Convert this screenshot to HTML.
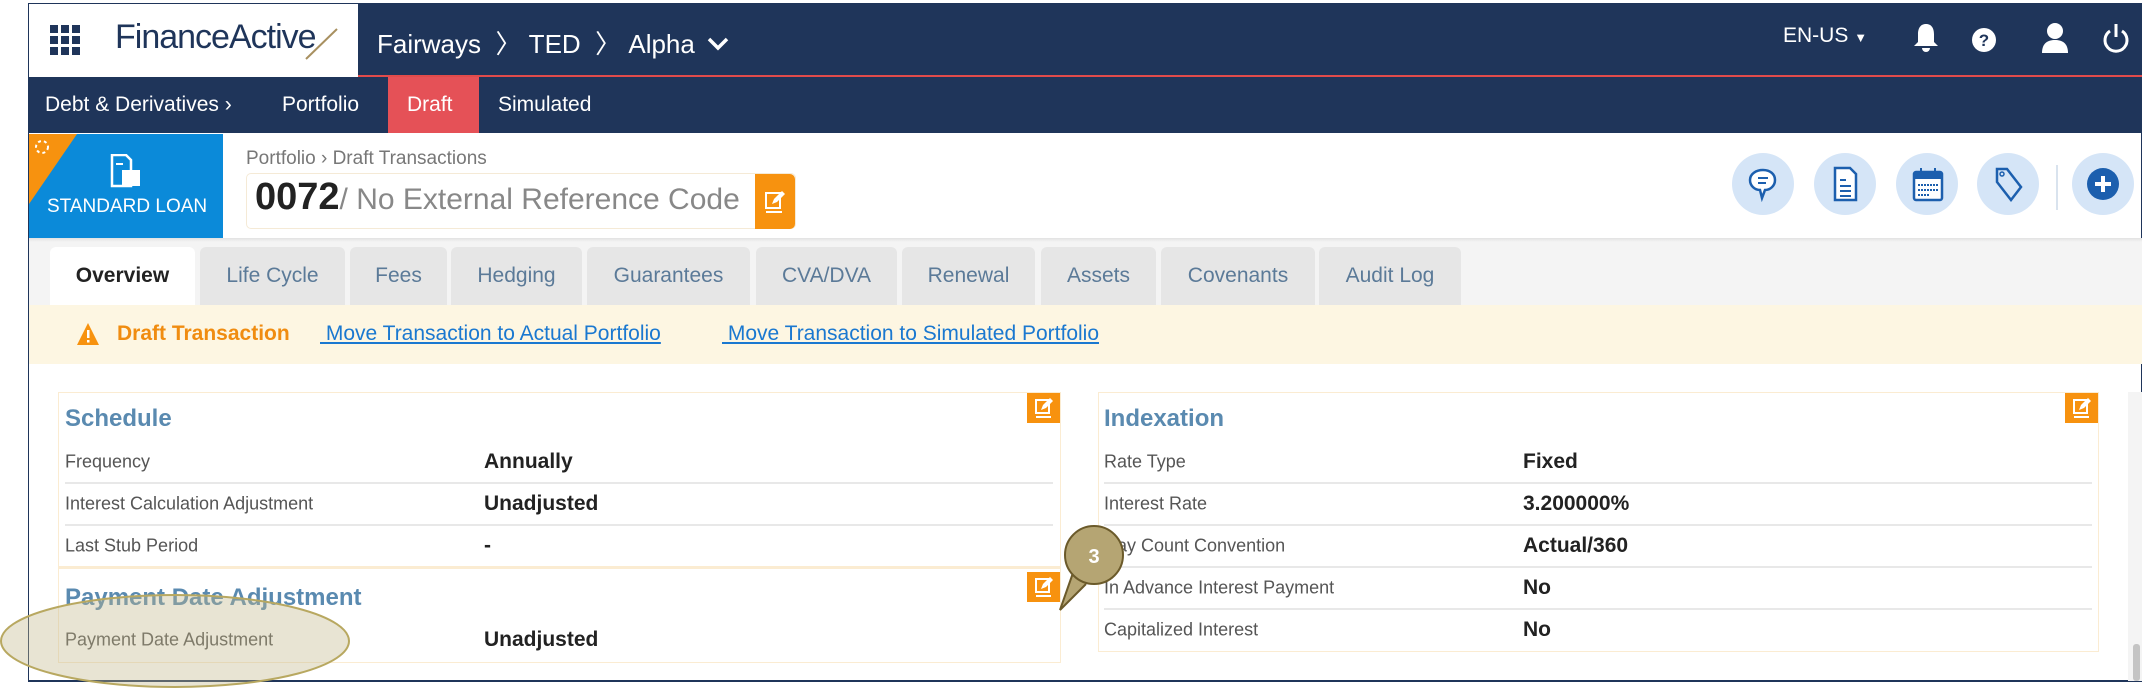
<!DOCTYPE html>
<html><head><meta charset="utf-8"><style>
*{margin:0;padding:0;box-sizing:border-box}
body{width:2150px;height:689px;background:#fff;position:relative;overflow:hidden;font-family:"Liberation Sans",sans-serif}
.a{position:absolute;white-space:nowrap}
.tab{position:absolute;top:247px;height:58px;background:#e6e6e6;border-radius:6px 6px 0 0;color:#5b7a98;font-size:21px;line-height:58px;text-align:center}
.lbl{position:absolute;font-size:18px;color:#555;transform:translateY(-50%)}
.val{position:absolute;font-size:21px;font-weight:bold;color:#222;transform:translateY(-50%)}
.ln{position:absolute;height:2px;background:#e8e8e8}
.ed{position:absolute;width:33px;height:30px;background:#f7920f}
.circ{position:absolute;top:153px;width:62px;height:62px;border-radius:50%;background:#d5e5f7}
</style></head><body>
<div class="a" style="left:28px;top:3px;width:2114px;height:679px;border:1px solid #1f355a;border-bottom:2px solid #1f355a"></div>
<div class="a" style="left:28px;top:3px;width:2114px;height:73px;background:#1f355a"></div>
<div class="a" style="left:29px;top:4px;width:329px;height:72px;background:#fff"></div>
<svg class="a" style="left:50px;top:25px" width="31" height="30"><g fill="#1f355a"><rect x="0" y="0" width="8" height="8"/><rect x="11" y="0" width="8" height="8"/><rect x="22" y="0" width="8" height="8"/><rect x="0" y="11" width="8" height="8"/><rect x="11" y="11" width="8" height="8"/><rect x="22" y="11" width="8" height="8"/><rect x="0" y="22" width="8" height="8"/><rect x="11" y="22" width="8" height="8"/><rect x="22" y="22" width="8" height="8"/></g></svg>
<div class="a" style="left:115px;top:18px;font-size:34px;color:#1f355a;letter-spacing:-1px">FinanceActive</div>
<svg class="a" style="left:303px;top:28px" width="35" height="32"><line x1="34" y1="1" x2="3" y2="31" stroke="#a89060" stroke-width="2"/></svg>
<div class="a" style="left:377px;top:24px;font-size:26px;color:#fff">Fairways &nbsp;〉 TED &nbsp;〉 Alpha</div>
<svg class="a" style="left:706px;top:36px" width="24" height="16"><path d="M3 3l9 9 9-9" fill="none" stroke="#fff" stroke-width="3.5"/></svg>
<div class="a" style="left:1783px;top:24px;font-size:21px;color:#fff">EN-US <span style="font-size:13px">&#9660;</span></div>
<svg class="a" style="left:1912px;top:22px" width="28" height="32"><path d="M14 2c-6 0-8 5-8 10v8l-4 4h24l-4-4v-8c0-5-2-10-8-10z M10 26a4 4 0 0 0 8 0z" fill="#fff"/></svg>
<svg class="a" style="left:1972px;top:28px" width="24" height="24"><circle cx="12" cy="12" r="12" fill="#fff"/><text x="12" y="18" text-anchor="middle" font-size="17" font-weight="bold" fill="#1f355a" font-family="Liberation Sans">?</text></svg>
<svg class="a" style="left:2040px;top:22px" width="30" height="32"><circle cx="15" cy="9" r="8" fill="#fff"/><path d="M2 31c0-10 6-13 13-13s13 3 13 13z" fill="#fff"/></svg>
<svg class="a" style="left:2102px;top:22px" width="28" height="32"><path d="M8 9a11 11 0 1 0 12 0" fill="none" stroke="#fff" stroke-width="3"/><line x1="14" y1="2" x2="14" y2="15" stroke="#fff" stroke-width="3"/></svg>
<div class="a" style="left:358px;top:75px;width:1784px;height:2px;background:#e24b4b"></div>
<div class="a" style="left:29px;top:77px;width:2113px;height:56px;background:#1f355a"></div>
<div class="a" style="left:388px;top:77px;width:91px;height:56px;background:#e55157"></div>
<div class="a" style="left:45px;top:93px;font-size:21px;color:#fff">Debt &amp; Derivatives ›</div>
<div class="a" style="left:282px;top:93px;font-size:21px;color:#fff">Portfolio</div>
<div class="a" style="left:407px;top:93px;font-size:21px;color:#fff">Draft</div>
<div class="a" style="left:498px;top:93px;font-size:21px;color:#fff">Simulated</div>
<div class="a" style="left:29px;top:134px;width:194px;height:104px;background:#0b8ad9"></div>
<svg class="a" style="left:29px;top:134px" width="50" height="72"><polygon points="0,0 48,0 0,70" fill="#f7920f"/><circle cx="13" cy="13" r="6" fill="none" stroke="#fff" stroke-width="2" stroke-dasharray="3 3"/></svg>
<svg class="a" style="left:110px;top:154px" width="32" height="34"><path d="M2 1h14l5 5v26H2z" fill="none" stroke="#fff" stroke-width="2.5"/><rect x="12" y="16" width="18" height="16" fill="#fff"/><line x1="6" y1="10" x2="13" y2="10" stroke="#fff" stroke-width="2"/></svg>
<div class="a" style="left:47px;top:196px;font-size:19px;color:#fff">STANDARD LOAN</div>
<div class="a" style="left:246px;top:148px;font-size:19px;color:#777">Portfolio › Draft Transactions</div>
<div class="a" style="left:246px;top:173px;width:550px;height:56px;border:1px solid #f5ead6;border-radius:5px"></div>
<div class="a" style="left:255px;top:176px;font-size:38px;font-weight:bold;color:#222">0072<span style="font-size:30px;font-weight:normal;color:#888">/ No External Reference Code</span></div>
<div class="a" style="left:755px;top:174px;width:40px;height:55px;background:#f7920f;border-radius:0 5px 5px 0"></div>
<svg class="a" style="left:764px;top:190px" width="22" height="24"><rect x="2" y="3" width="14" height="15" fill="none" stroke="#fff" stroke-width="2"/><path d="M8 14l2-5 8-8 3 3-8 8z" fill="#fff"/><line x1="2" y1="22" x2="18" y2="22" stroke="#fff" stroke-width="2"/></svg>
<div class="circ" style="left:1732px"></div><div class="circ" style="left:1814px"></div><div class="circ" style="left:1896px"></div><div class="circ" style="left:1977px"></div><div class="circ" style="left:2072px"></div>
<div class="a" style="left:2056px;top:165px;width:2px;height:45px;background:#d9e3ee"></div>
<svg class="a" style="left:1748px;top:168px" width="30" height="34"><path d="M15 2c7 0 12 4 12 10s-5 10-10 10l-3 8-2-8c-5 0-10-4-10-10S8 2 15 2z" fill="#fff" stroke="#1c5fae" stroke-width="2.5"/><line x1="10" y1="10" x2="20" y2="10" stroke="#1c5fae" stroke-width="2"/><line x1="10" y1="15" x2="18" y2="15" stroke="#1c5fae" stroke-width="2"/></svg>
<svg class="a" style="left:1833px;top:166px" width="26" height="36"><path d="M2 2h15l6 6v26H2z" fill="#fff" stroke="#1c5fae" stroke-width="2.5"/><g stroke="#1c5fae" stroke-width="2"><line x1="7" y1="14" x2="13" y2="14"/><line x1="7" y1="20" x2="18" y2="20"/><line x1="7" y1="25" x2="18" y2="25"/><line x1="7" y1="30" x2="18" y2="30"/></g></svg>
<svg class="a" style="left:1912px;top:166px" width="32" height="36"><rect x="2" y="6" width="28" height="28" rx="2" fill="#fff" stroke="#1c5fae" stroke-width="2.5"/><rect x="2" y="6" width="28" height="7" fill="#1c5fae"/><line x1="9" y1="2" x2="9" y2="9" stroke="#1c5fae" stroke-width="2"/><line x1="23" y1="2" x2="23" y2="9" stroke="#1c5fae" stroke-width="2"/><g stroke="#1c5fae" stroke-width="2" stroke-dasharray="2 1"><line x1="6" y1="19" x2="26" y2="19"/><line x1="6" y1="24" x2="26" y2="24"/><line x1="6" y1="29" x2="18" y2="29"/></g></svg>
<svg class="a" style="left:1994px;top:166px" width="30" height="36"><path d="M3 3h10l14 18-10 13L3 16z" fill="none" stroke="#1c5fae" stroke-width="2.5"/><circle cx="8" cy="8" r="2" fill="none" stroke="#1c5fae" stroke-width="1.5"/></svg>
<svg class="a" style="left:2087px;top:168px" width="32" height="32"><circle cx="16" cy="16" r="16" fill="#1c5fae"/><path d="M16 8v16M8 16h16" stroke="#fff" stroke-width="4"/></svg>
<div class="a" style="left:29px;top:238px;width:2113px;height:67px;background:#f4f4f4"></div>
<div class="a" style="left:29px;top:238px;width:2113px;height:4px;background:linear-gradient(#e2e2e2,#f4f4f4)"></div>
<div class="tab" style="left:50px;width:145px;background:#fff;color:#222;font-weight:bold">Overview</div>
<div class="tab" style="left:200px;width:145px">Life Cycle</div>
<div class="tab" style="left:350px;width:97px">Fees</div>
<div class="tab" style="left:451px;width:131px">Hedging</div>
<div class="tab" style="left:587px;width:163px">Guarantees</div>
<div class="tab" style="left:756px;width:141px">CVA/DVA</div>
<div class="tab" style="left:902px;width:133px">Renewal</div>
<div class="tab" style="left:1041px;width:115px">Assets</div>
<div class="tab" style="left:1161px;width:154px">Covenants</div>
<div class="tab" style="left:1319px;width:142px">Audit Log</div>
<div class="a" style="left:29px;top:305px;width:2113px;height:59px;background:#fdf6e2"></div>
<svg class="a" style="left:76px;top:322px" width="24" height="24"><polygon points="12,1 23,23 1,23" fill="#f7920f"/><rect x="11" y="8" width="2.5" height="8" fill="#fff"/><rect x="11" y="18" width="2.5" height="2.5" fill="#fff"/></svg>
<div class="a" style="left:117px;top:322px;font-size:21px;font-weight:bold;color:#f08c10">Draft Transaction</div>
<div class="a" style="left:320px;top:322px;font-size:21px;color:#1a78d0;text-decoration:underline">&nbsp;Move Transaction to Actual Portfolio</div>
<div class="a" style="left:722px;top:322px;font-size:21px;color:#1a78d0;text-decoration:underline">&nbsp;Move Transaction to Simulated Portfolio</div>
<div class="a" style="left:58px;top:392px;width:1003px;height:271px;border:1px solid #fbecd2"></div>
<div class="a" style="left:58px;top:566px;width:1003px;height:3px;background:#fbecd2"></div>
<div class="a" style="left:65px;top:405px;font-size:24px;font-weight:bold;color:#5a8ab0">Schedule</div>
<div class="lbl" style="left:65px;top:462px">Frequency</div><div class="val" style="left:484px;top:462px">Annually</div>
<div class="ln" style="left:65px;top:482px;width:988px"></div>
<div class="lbl" style="left:65px;top:504px">Interest Calculation Adjustment</div><div class="val" style="left:484px;top:504px">Unadjusted</div>
<div class="ln" style="left:65px;top:524px;width:988px"></div>
<div class="lbl" style="left:65px;top:546px">Last Stub Period</div><div class="val" style="left:484px;top:546px">-</div>
<div class="a" style="left:65px;top:584px;font-size:24px;font-weight:bold;color:#5a8ab0">Payment Date Adjustment</div>
<div class="lbl" style="left:65px;top:640px">Payment Date Adjustment</div><div class="val" style="left:484px;top:640px">Unadjusted</div>
<div class="a" style="left:1098px;top:392px;width:1001px;height:260px;border:1px solid #fbecd2"></div>
<div class="a" style="left:1104px;top:405px;font-size:24px;font-weight:bold;color:#5a8ab0">Indexation</div>
<div class="lbl" style="left:1104px;top:462px">Rate Type</div><div class="val" style="left:1523px;top:462px">Fixed</div>
<div class="ln" style="left:1104px;top:482px;width:988px"></div>
<div class="lbl" style="left:1104px;top:504px">Interest Rate</div><div class="val" style="left:1523px;top:504px">3.200000%</div>
<div class="ln" style="left:1104px;top:524px;width:988px"></div>
<div class="lbl" style="left:1104px;top:546px">Day Count Convention</div><div class="val" style="left:1523px;top:546px">Actual/360</div>
<div class="ln" style="left:1104px;top:566px;width:988px"></div>
<div class="lbl" style="left:1104px;top:588px">In Advance Interest Payment</div><div class="val" style="left:1523px;top:588px">No</div>
<div class="ln" style="left:1104px;top:608px;width:988px"></div>
<div class="lbl" style="left:1104px;top:630px">Capitalized Interest</div><div class="val" style="left:1523px;top:630px">No</div>
<div class="ed" style="left:1027px;top:393px"></div><div class="ed" style="left:1027px;top:572px"></div><div class="ed" style="left:2065px;top:393px"></div>
<svg class="a" style="left:1034px;top:396px" width="20" height="24"><rect x="2" y="4" width="13" height="13" fill="none" stroke="#fff" stroke-width="2"/><path d="M7 14l2-5 7-7 3 3-7 7z" fill="#fff"/><line x1="2" y1="21" x2="17" y2="21" stroke="#fff" stroke-width="2"/></svg>
<svg class="a" style="left:1034px;top:575px" width="20" height="24"><rect x="2" y="4" width="13" height="13" fill="none" stroke="#fff" stroke-width="2"/><path d="M7 14l2-5 7-7 3 3-7 7z" fill="#fff"/><line x1="2" y1="21" x2="17" y2="21" stroke="#fff" stroke-width="2"/></svg>
<svg class="a" style="left:2072px;top:396px" width="20" height="24"><rect x="2" y="4" width="13" height="13" fill="none" stroke="#fff" stroke-width="2"/><path d="M7 14l2-5 7-7 3 3-7 7z" fill="#fff"/><line x1="2" y1="21" x2="17" y2="21" stroke="#fff" stroke-width="2"/></svg>
<div class="a" style="left:2128px;top:392px;width:14px;height:289px;background:#f4f4f4"></div>
<div class="a" style="left:2133px;top:644px;width:7px;height:37px;background:#c4c4c4;border-radius:3px"></div>
<svg class="a" style="left:0;top:520px" width="1140" height="169"><path d="M1074 50 L1060 90 L1086 64" fill="#b5a573" stroke="#6b5a2a" stroke-width="2"/><circle cx="1094" cy="35" r="29" fill="#b5a573" stroke="#6b5a2a" stroke-width="2"/><text x="1094" y="43" text-anchor="middle" font-size="20" font-weight="bold" fill="#fff" font-family="Liberation Sans">3</text><ellipse cx="175" cy="121" rx="174" ry="46" fill="rgba(195,185,140,0.38)" stroke="#b8a860" stroke-width="2"/></svg>
</body></html>
